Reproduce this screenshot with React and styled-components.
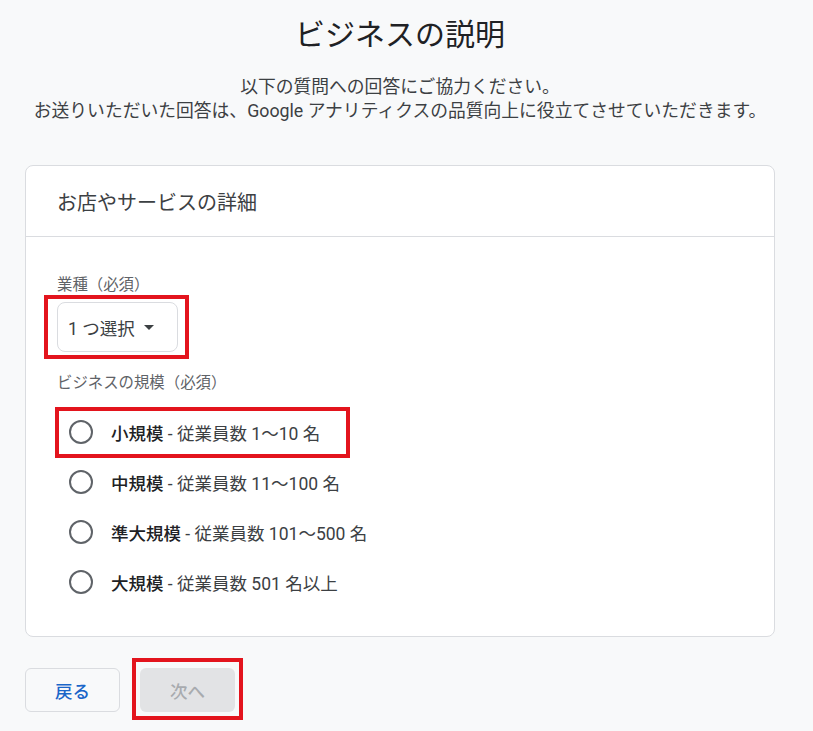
import React from "react";
import styled, { createGlobalStyle } from "styled-components";

const GlobalStyle = createGlobalStyle`
  body {
    margin: 0;
    background: #f8f9fa;
    font-family: Roboto, "Noto Sans CJK JP", sans-serif;
    color: #202124;
  }
`;

const Page = styled.div`
  width: 750px;
  padding: 17px 0 10px 25px;
`;

const Title = styled.h1`
  margin: 0;
  font-size: 30px;
  line-height: 36px;
  font-weight: 400;
  text-align: center;
  color: #202124;
`;

const Intro = styled.p`
  margin: 22px 0 0;
  font-size: 17.8px;
  line-height: 24px;
  text-align: center;
  color: #3c4043;
`;

const Card = styled.section`
  margin-top: 42px;
  background: #fff;
  border: 1px solid #dadce0;
  border-radius: 8px;
`;

const CardHeader = styled.div`
  height: 70px;
  display: flex;
  align-items: center;
  padding: 0 31px;
  font-size: 20px;
  color: #3c4043;
  border-bottom: 1px solid #dadce0;
`;

const CardBody = styled.div`
  padding: 38px 31px 29px;
`;

const FieldLabel = styled.div`
  font-size: 15.4px;
  line-height: 20px;
  color: #5f6368;
  margin-bottom: ${(p) => p.gap || 0}px;
`;

// red annotation frame drawn over the wrapped control
const Highlight = styled.div`
  position: relative;
  display: inline-flex;
  align-self: flex-start;
  &::after {
    content: "";
    position: absolute;
    top: ${(p) => p.t}px;
    right: ${(p) => p.r}px;
    bottom: ${(p) => p.b}px;
    left: ${(p) => p.l}px;
    border: 4px solid #e3141d;
    pointer-events: none;
  }
`;

const Select = styled.button`
  display: flex;
  align-items: center;
  gap: 9px;
  width: 121px;
  height: 50px;
  padding: 0 0 0 10px;
  background: #fff;
  border: 1px solid #dadce0;
  border-radius: 8px;
  font: inherit;
  font-size: 17.5px;
  color: #3c4043;
  cursor: pointer;
`;

const Caret = styled.span`
  width: 0;
  height: 0;
  border-left: 5px solid transparent;
  border-right: 5px solid transparent;
  border-top: 5px solid #3c4043;
  margin-top: 1px;
`;

const Spacer = styled.div`
  height: 21px;
`;

const RadioList = styled.div`
  display: flex;
  flex-direction: column;
  margin-top: 14px;
`;

const RadioRow = styled.label`
  display: flex;
  align-items: center;
  height: 50px;
  font-size: 17.5px;
  color: #3c4043;
  cursor: pointer;
`;

const RadioMark = styled.span`
  width: 48px;
  display: flex;
  justify-content: center;
  margin-right: 6px;
  &::before {
    content: "";
    width: 20px;
    height: 20px;
    border: 2px solid #5f6368;
    border-radius: 50%;
  }
`;

const Strong = styled.span`
  font-weight: 500;
  color: #202124;
`;

const Actions = styled.div`
  display: flex;
  gap: 20px;
  margin-top: 31px;
`;

const Button = styled.button`
  width: 95px;
  height: 44px;
  border-radius: 6px;
  font: inherit;
  font-size: 17.5px;
  font-weight: 500;
  border: 1px solid ${(p) => (p.disabled ? "transparent" : "#dadce0")};
  background: ${(p) => (p.disabled ? "#e2e3e5" : "#f8f9fa")};
  color: ${(p) => (p.disabled ? "#a8abaf" : "#1a66c9")};
  cursor: ${(p) => (p.disabled ? "default" : "pointer")};
`;

const sizes = [
  { name: "小規模", range: "従業員数 1〜10 名" },
  { name: "中規模", range: "従業員数 11〜100 名" },
  { name: "準大規模", range: "従業員数 101〜500 名" },
  { name: "大規模", range: "従業員数 501 名以上" },
];

export default function App() {
  return (
    <>
      <GlobalStyle />
      <Page>
        <Title>ビジネスの説明</Title>
        <Intro>
          以下の質問への回答にご協力ください。
          <br />
          お送りいただいた回答は、Google アナリティクスの品質向上に役立てさせていただきます。
        </Intro>
        <Card>
          <CardHeader>お店やサービスの詳細</CardHeader>
          <CardBody>
            <FieldLabel gap={7}>業種（必須）</FieldLabel>
            <Highlight t={-7} r={-11} b={-7} l={-13}>
              <Select>
                1 つ選択
                <Caret />
              </Select>
            </Highlight>
            <Spacer />
            <FieldLabel>ビジネスの規模（必須）</FieldLabel>
            <RadioList>
              {sizes.map((s, i) => {
                const row = (
                  <RadioRow key={s.name}>
                    <RadioMark />
                    <Strong>{s.name}</Strong>&nbsp;- {s.range}
                  </RadioRow>
                );
                return i === 0 ? (
                  <Highlight key={s.name} t={0} r={-30} b={-1} l={-2}>
                    {row}
                  </Highlight>
                ) : (
                  row
                );
              })}
            </RadioList>
          </CardBody>
        </Card>
        <Actions>
          <Button>戻る</Button>
          <Highlight t={-10} r={-8} b={-8} l={-8}>
            <Button disabled>次へ</Button>
          </Highlight>
        </Actions>
      </Page>
    </>
  );
}
